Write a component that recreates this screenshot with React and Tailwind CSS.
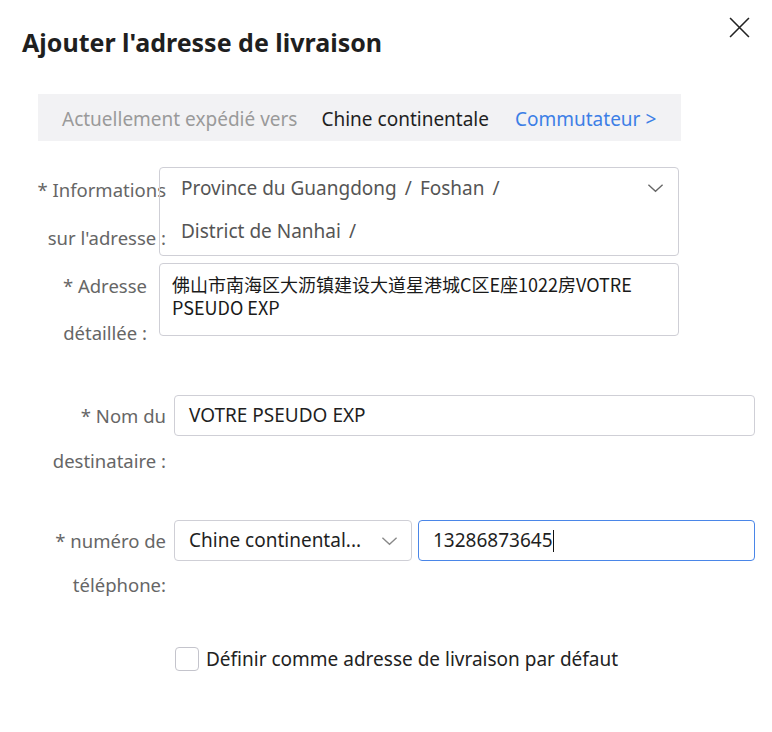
import React from "react";

const FONT = "font-['Noto_Sans','Noto_Sans_CJK_SC',sans-serif]";

const Chevron = ({ className }) => (
  <svg viewBox="0 0 18 12" className={className} fill="none" stroke="currentColor" strokeWidth="1.4">
    <path d="M1.5 2.5 L9 9.5 L16.5 2.5" />
  </svg>
);

const App = () => {
  return (
    <div className={`w-[772px] h-[732px] bg-white ${FONT} text-[#333]`}>
      {/* header */}
      <div className="flex items-start justify-between pl-[22px] pr-[22px] pt-[26px]">
        <h1 className="text-[25px] leading-[32px] font-bold text-[#1f1f1f]">
          Ajouter l'adresse de livraison
        </h1>
        <button className="mt-[-9px] text-[#222]">
          <svg viewBox="0 0 20 20" className="w-[21px] h-[21px]" fill="none" stroke="currentColor" strokeWidth="1.5">
            <path d="M1 1 L19 19 M19 1 L1 19" />
          </svg>
        </button>
      </div>

      {/* shipping banner */}
      <div className="ml-[38px] mt-[36px] w-[643px] h-[47px] bg-[#f2f2f4] flex items-center pl-[24px] pt-[3px] text-[19px]">
        <span className="text-[#9a9a9a]">Actuellement expédié vers</span>
        <span className="ml-[24px] text-[#1f1f1f]">Chine continentale</span>
        <span className="ml-[26px] text-[#3d7fe6]">Commutateur &gt;</span>
      </div>

      {/* address info */}
      <div className="flex mt-[25px]">
        <div className="w-[166px] shrink-0 text-right text-[18.5px] leading-[48px] text-[#666] whitespace-nowrap">
          <div>* Informations</div>
          <div>sur l'adresse :</div>
        </div>
        <div className="ml-[-7px] mt-[1px] w-[520px] h-[89px] border border-[#cfcfd6] rounded-[4px] flex pl-[21px] pr-[14px] pt-[8px]">
          <div className="flex-1 flex flex-wrap gap-y-[19px] content-start text-[19px] leading-[24px] text-[#555]">
            <span>Province du Guangdong<span className="mx-[8px]">/</span></span>
            <span>Foshan<span className="mx-[8px]">/</span></span>
            <span className="w-full">District de Nanhai<span className="mx-[8px]">/</span></span>
          </div>
          <Chevron className="w-[17px] h-[12px] mt-[6px] text-[#666]" />
        </div>
      </div>

      {/* detailed address */}
      <div className="flex">
        <div className="w-[147px] shrink-0 text-right text-[18.5px] leading-[47px] text-[#666] whitespace-nowrap">
          <div>* Adresse</div>
          <div>détaillée :</div>
        </div>
        <div className="ml-[12px] mt-[1px] w-[520px] h-[73px] border border-[#cfcfd6] rounded-[4px] pl-[12px] pt-[9px] text-[18px] leading-[23px] text-[#1a1a1a] font-['Noto_Sans_CJK_SC',sans-serif]">
          佛山市南海区大沥镇建设大道星港城C区E座1022房VOTRE
          <br />
          PSEUDO EXP
        </div>
      </div>

      {/* recipient name */}
      <div className="flex mt-[37px]">
        <div className="w-[166px] shrink-0 text-right text-[18.5px] leading-[45px] text-[#666] whitespace-nowrap">
          <div>* Nom du</div>
          <div>destinataire :</div>
        </div>
        <div className="ml-[8px] mt-[2px] w-[581px] h-[41px] border border-[#cfcfd6] rounded-[4px] flex items-center pl-[14px] text-[19px] text-[#1f1f1f]">
          VOTRE PSEUDO EXP
        </div>
      </div>

      {/* phone */}
      <div className="flex mt-[36px]">
        <div className="w-[166px] shrink-0 text-right text-[18.5px] leading-[44px] text-[#666] whitespace-nowrap">
          <div>* numéro de</div>
          <div>téléphone:</div>
        </div>
        <div className="ml-[8px] mt-[1px] w-[238px] h-[41px] border border-[#cfcfd6] rounded-[4px] flex items-center justify-between pl-[14px] pr-[13px] text-[19px] text-[#1f1f1f]">
          <span>Chine continental...</span>
          <Chevron className="w-[17px] h-[12px] text-[#888]" />
        </div>
        <div className="ml-[6px] mt-[1px] w-[337px] h-[41px] border border-[#4a86e8] rounded-[4px] flex items-center pl-[14px] text-[19px] text-[#1f1f1f]">
          <span>13286873645</span>
          <span className="w-[1px] h-[22px] bg-[#111]" />
        </div>
      </div>

      {/* default checkbox */}
      <div className="flex items-center ml-[175px] mt-[38px]">
        <span className="w-[24px] h-[24px] border border-[#c4c4cc] rounded-[4px]" />
        <span className="ml-[7px] text-[19px] text-[#222]">
          Définir comme adresse de livraison par défaut
        </span>
      </div>
    </div>
  );
};

export default App;
